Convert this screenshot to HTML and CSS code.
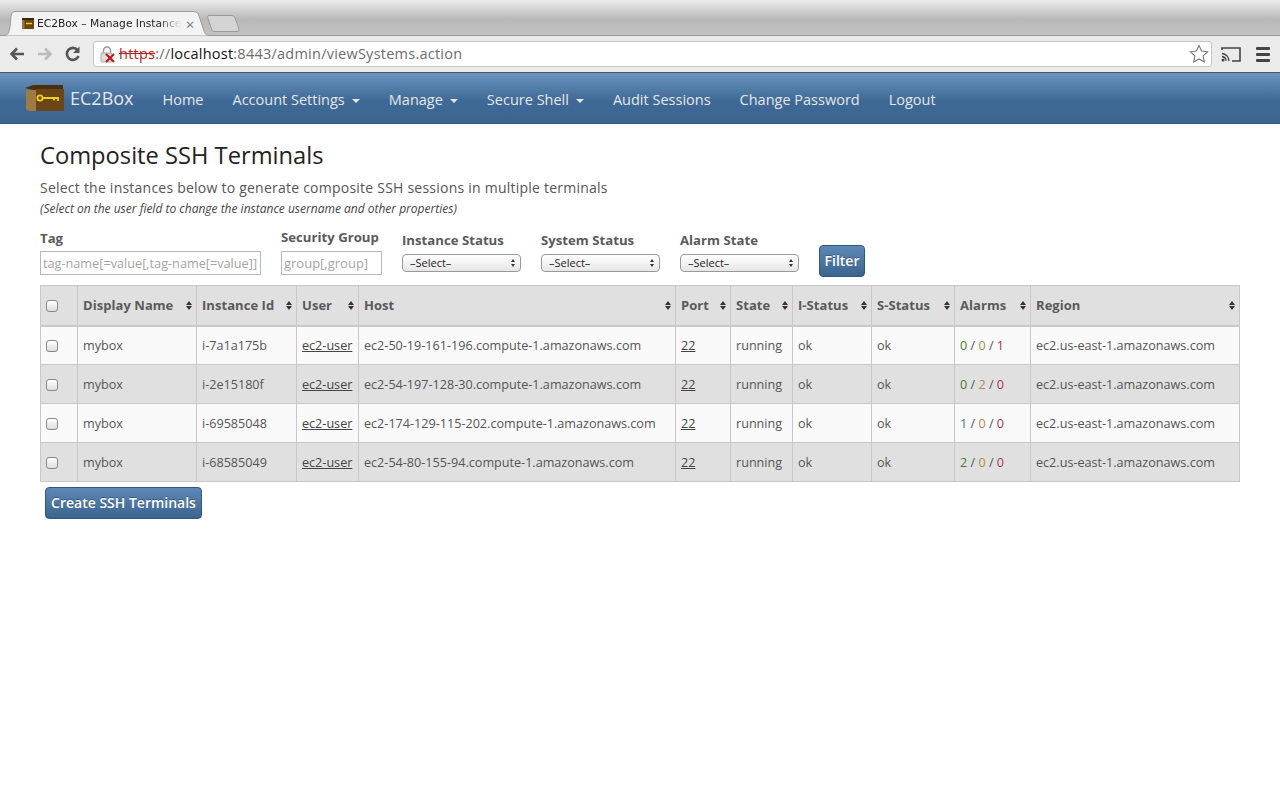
FILE: index.html
```html
<!DOCTYPE html>
<html lang="en">
<head>
<meta charset="utf-8">
<title>EC2Box - Manage Instances</title>
<link rel="stylesheet" href="styles.css">
</head>
<body>
<div class="tabstrip">
  <div class="tab">
    <svg class="tab-shape" width="208" height="25" viewBox="0 0 208 25"><path d="M0.500 24.500C6 24.500 7 21 8 5Q8.500 .5 13 .5H190Q195 .5 196 5L201 20C202 23.500 204 24.500 207.500 24.500" fill="#f3f3f3" stroke="#9c9c9c"/></svg>
    <svg class="favicon" width="14" height="13" viewBox="0 0 14 13"><path d="M1 1h12v11H1z" fill="#6b4513"/><path d="M1 1h2.500v11H1z" fill="#9a7440"/><path d="M1 1h12v2H1z" fill="#3b2508"/><path d="M5 6.500h6" stroke="#e8d020" stroke-width="1.500"/></svg>
    <span class="tab-title">EC2Box – Manage Instance</span>
    <span class="tab-close">×</span>
  </div>
  <svg class="newtab" width="33" height="17" viewBox="0 0 33 17"><path d="M.500 2Q.500 .5 2 .5H25Q27 .5 28 3L32 14Q32.500 16.500 30 16.500H7Q5 16.500 4.500 14z" fill="#d4d4d4" stroke="#9a9a9a"/></svg>
</div>
<div class="toolbar">
  <svg class="tool" width="18" height="18" viewBox="0 0 18 18"><path d="M16 9H4M9 3.500 3.500 9 9 14.500" fill="none" stroke="#555" stroke-width="2.600"/></svg>
  <svg class="tool" width="18" height="18" viewBox="0 0 18 18"><path d="M2 9h12M9 3.500 14.500 9 9 14.500" fill="none" stroke="#bbb" stroke-width="2.600"/></svg>
  <svg class="tool" width="18" height="18" viewBox="0 0 18 18"><path d="M14.500 11A6 6 0 1 1 13.500 5" fill="none" stroke="#555" stroke-width="2.600"/><path d="M15.500 1.500v6.500H9z" fill="#555"/></svg>
  <div class="omnibox">
    <svg class="lock" width="16" height="17" viewBox="0 0 16 17"><path d="M3.500 7V4.500a3.500 3.500 0 0 1 7 0V7" fill="none" stroke="#999" stroke-width="1.500"/><rect x="1" y="7" width="11" height="9" rx="1" fill="#ddd" stroke="#aaa"/><path d="M6 8l8 8M14 8l-8 8" stroke="#c8101c" stroke-width="2"/></svg>
    <span class="url"><s class="scheme">https</s><span class="gray">://</span><span class="host">localhost</span><span class="gray">:8443/admin/viewSystems.action</span></span>
    <svg class="star" width="20" height="20" viewBox="0 0 20 20"><path d="M10 1.500l2.600 5.600 6 .7-4.500 4.100 1.200 6L10 15l-5.300 2.900 1.200-6L1.400 7.800l6-.7z" fill="#fff" stroke="#777" stroke-width="1.100"/></svg>
  </div>
  <svg class="cast" width="20" height="15" viewBox="0 0 20 15"><path d="M1 3V1h18v13h-8" fill="none" stroke="#444" stroke-width="1.600"/><path d="M1 6.500A7.500 7.500 0 0 1 8 14M1 9.500A4.500 4.500 0 0 1 5 14" fill="none" stroke="#444" stroke-width="1.300"/><circle cx="2" cy="13" r="1.500" fill="#444"/></svg>
  <div class="menu-icon"><i></i><i></i><i></i></div>
</div>
<nav class="navbar">
  <svg class="logo" width="40" height="26" viewBox="0 0 40 26"><path d="M0 3 8 0h30v4L12 6z" fill="#4a2f0c"/><path d="M1 5h10v21H4L1 24z" fill="#a07a45"/><path d="M11 4h28v22H11z" fill="#6a4515"/><circle cx="15" cy="13" r="2.600" fill="none" stroke="#ecd21e" stroke-width="1.800"/><path d="M17.500 13H33v3M29 13v2.500" fill="none" stroke="#ecd21e" stroke-width="1.800"/></svg>
  <span class="brand">EC2Box</span>
  <ul class="nav-list">
    <li>Home</li>
    <li>Account Settings<b class="caret"></b></li>
    <li>Manage<b class="caret"></b></li>
    <li>Secure Shell<b class="caret"></b></li>
    <li>Audit Sessions</li>
    <li>Change Password</li>
    <li>Logout</li>
  </ul>
</nav>
<main class="content">
  <h1>Composite SSH Terminals</h1>
  <p class="lead">Select the instances below to generate composite SSH sessions in multiple terminals</p>
  <p class="note">(Select on the user field to change the instance username and other properties)</p>
  <form class="filters">
    <div class="field f-tag"><label>Tag</label><input class="tag-input" type="text" placeholder="tag-name[=value[,tag-name[=value]]"></div>
    <div class="field f-sec"><label>Security Group</label><input class="sec-input" type="text" placeholder="group[,group]"></div>
    <div class="field f-sel"><label>Instance Status</label><div class="sel">–Select–</div></div>
    <div class="field f-sel"><label>System Status</label><div class="sel">–Select–</div></div>
    <div class="field f-sel"><label>Alarm State</label><div class="sel">–Select–</div></div>
    <button class="btn btn-filter" type="button">Filter</button>
  </form>
  <table class="grid">
    <colgroup>
      <col class="c0"><col class="c1"><col class="c2"><col class="c3"><col class="c4"><col class="c5"><col class="c6"><col class="c7"><col class="c8"><col class="c9"><col class="c10">
    </colgroup>
    <thead>
      <tr>
        <th><span class="check"></span></th>
        <th class="sort">Display Name</th>
        <th class="sort">Instance Id</th>
        <th class="sort">User</th>
        <th class="sort">Host</th>
        <th class="sort">Port</th>
        <th class="sort">State</th>
        <th class="sort">I-Status</th>
        <th class="sort">S-Status</th>
        <th class="sort">Alarms</th>
        <th class="sort">Region</th>
      </tr>
    </thead>
    <tbody>
      <tr>
        <td><span class="check"></span></td><td>mybox</td><td>i-7a1a175b</td><td><u>ec2-user</u></td><td>ec2-50-19-161-196.compute-1.amazonaws.com</td><td><u>22</u></td><td>running</td><td>ok</td><td>ok</td>
        <td><span class="g">0</span> / <span class="o">0</span> / <span class="r">1</span></td><td>ec2.us-east-1.amazonaws.com</td>
      </tr>
      <tr>
        <td><span class="check"></span></td><td>mybox</td><td>i-2e15180f</td><td><u>ec2-user</u></td><td>ec2-54-197-128-30.compute-1.amazonaws.com</td><td><u>22</u></td><td>running</td><td>ok</td><td>ok</td>
        <td><span class="g">0</span> / <span class="o">2</span> / <span class="r">0</span></td><td>ec2.us-east-1.amazonaws.com</td>
      </tr>
      <tr>
        <td><span class="check"></span></td><td>mybox</td><td>i-69585048</td><td><u>ec2-user</u></td><td>ec2-174-129-115-202.compute-1.amazonaws.com</td><td><u>22</u></td><td>running</td><td>ok</td><td>ok</td>
        <td><span class="b">1</span> / <span class="o">0</span> / <span class="r">0</span></td><td>ec2.us-east-1.amazonaws.com</td>
      </tr>
      <tr>
        <td><span class="check"></span></td><td>mybox</td><td>i-68585049</td><td><u>ec2-user</u></td><td>ec2-54-80-155-94.compute-1.amazonaws.com</td><td><u>22</u></td><td>running</td><td>ok</td><td>ok</td>
        <td><span class="g">2</span> / <span class="o">0</span> / <span class="r">0</span></td><td>ec2.us-east-1.amazonaws.com</td>
      </tr>
    </tbody>
  </table>
  <button class="btn btn-create" type="button">Create SSH Terminals</button>
</main>
</body>
</html>
```
FILE: styles.css
```css
* { box-sizing: border-box; }
html, body { margin: 0; padding: 0; height: 100%; overflow: hidden; background: #fff; }
body { font-family: "Open Sans", sans-serif; color: #555; font-size: 13px; }

.tabstrip { height: 36px; display: flex; align-items: flex-end; padding-left: 3px; background: linear-gradient(#ececec, #b8b8b8 55%, #c2c2c2); border-bottom: 1px solid #9a9a9a; }
.tab { position: relative; flex: none; width: 208px; height: 25px; margin-bottom: -1px; padding: 0 14px 0 18px; display: flex; align-items: center; }
.tab-shape { position: absolute; left: 0; top: 0; }
.favicon { position: relative; flex: none; margin-right: 2px; }
.tab-title { position: relative; flex: none; white-space: nowrap; font-family: "DejaVu Sans", sans-serif; font-size: 10.700px; color: #222; -webkit-mask-image: linear-gradient(to right, #000 85%, transparent); mask-image: linear-gradient(to right, #000 85%, transparent); }
.tab-close { position: relative; flex: none; width: 14px; margin-left: auto; text-align: center; font-size: 15px; line-height: 14px; color: #777; }
.newtab { flex: none; margin: 0 0 3px -4px; }

.toolbar { height: 36px; display: flex; align-items: center; padding-left: 8px; background: #ebebeb; }
.tool { flex: none; margin-right: 10px; }
.tool:nth-child(3) { margin-right: 11px; }
.omnibox { width: 1119px; height: 26px; display: flex; align-items: center; padding: 0 2px 0 6px; background: #fff; border: 1px solid #c6c6c6; border-radius: 3px; flex: none; }
.lock { flex: none; margin-right: 3px; }
.url { flex: 1; padding-bottom: 2px; font-size: 14.500px; letter-spacing: .24px; white-space: nowrap; }
.scheme { color: #bb2020; }
.gray { color: #6c6c6c; }
.host { color: #111; }
.star { flex: none; }
.cast { flex: none; margin-left: 9px; }
.menu-icon { width: 14px; margin-left: 15px; display: flex; flex-direction: column; gap: 3px; }
.menu-icon i { display: block; height: 3px; background: #444; border-radius: 1px; }

.navbar { height: 52px; display: flex; align-items: center; padding-left: 25px; background: linear-gradient(#6a94bf, #3f6a96 55%, #3a658f); border-top: 1px solid #555; border-bottom: 1px solid #33587c; }
.logo { flex: none; }
.brand { margin-left: 5px; font-size: 18px; color: #e6e6e6; }
.nav-list { list-style: none; margin: 2px 0 0 29px; padding: 0; display: flex; gap: 29px; }
.nav-list li { font-size: 14.500px; color: #e6e6e6; white-space: nowrap; }
.caret { display: inline-block; margin-left: 7px; vertical-align: middle; border-top: 4px solid #e6e6e6; border-left: 4px solid transparent; border-right: 4px solid transparent; }

.content { padding: 0 40px; }
h1 { margin: 16px 0 0; font-size: 23.700px; line-height: 31px; font-weight: 400; color: #222; }
.lead { margin: 7px 0 0; font-size: 14px; line-height: 20px; letter-spacing: .23px; color: #555; }
.note { margin: 3px 0 0; font-size: 12px; line-height: 16px; font-style: italic; color: #444; }

.filters { display: flex; align-items: flex-end; margin-top: 8px; height: 60px; padding-bottom: 8px; }
.field { display: flex; flex-direction: column; margin-right: 20px; }
.field label { font-size: 13.200px; font-weight: 700; color: #5a5a5a; line-height: 16px; white-space: nowrap; }
.f-tag, .f-sec { margin-bottom: 2px; }
.f-tag label { margin-bottom: 5px; }
.f-sec label { margin-bottom: 6px; }
.f-sel { margin-right: 20px; margin-bottom: 5px; }
.f-sel label { margin-bottom: 6px; }
.tag-input, .sec-input { height: 24px; padding: 0 2px; font: 13px "Open Sans", sans-serif; border: 1px solid #b8b8b8; background: #fff; outline: 0; }
.tag-input { width: 221px; font-size: 12.700px; }
.sec-input { width: 101px; }
::placeholder { color: #a4a4a4; opacity: 1; }
.sel { position: relative; width: 119px; height: 18px; padding-left: 7px; font-size: 11px; line-height: 16px; color: #222; background: linear-gradient(#fff, #e6e6e6); border: 1px solid #999; border-radius: 4px; }
.sel::before, .sel::after { content: ""; position: absolute; right: 5px; border-left: 2.500px solid transparent; border-right: 2.500px solid transparent; }
.sel::before { top: 4px; border-bottom: 3px solid #333; }
.sel::after { top: 9px; border-top: 3px solid #333; }
.btn { font-family: "Open Sans", sans-serif; font-weight: 600; color: #fff; background: linear-gradient(#5d89b6, #3a648e); border: 1px solid #33577c; border-radius: 4px; text-shadow: 0 -1px 0 rgba(0,0,0,.3); cursor: default; }
.btn-filter { width: 46px; height: 32px; padding: 0 0 2px; font-size: 14px; }
.btn-create { display: block; width: 157px; height: 32px; margin: 5px 0 0 5px; padding: 0 0 2px; font-size: 14px; }

.grid { width: 1199px; table-layout: fixed; border-collapse: collapse; border: 1px solid #c8c8c8; }
.c0 { width: 37px; } .c1 { width: 119px; } .c2 { width: 100px; } .c3 { width: 62px; } .c4 { width: 317px; } .c5 { width: 55px; } .c6 { width: 62px; } .c7 { width: 79px; } .c8 { width: 83px; } .c9 { width: 76px; } .c10 { width: 209px; }
.grid th, .grid td { padding: 0 5px; border: 1px solid #c8c8c8; white-space: nowrap; text-align: left; font-size: 12.620px; color: #555; }
.grid th { height: 40px; font-size: 13px; color: #5a5a5a; background: #e0e0e0; border-bottom: 2px solid #c8c8c8; font-weight: 700; position: relative; letter-spacing: .05px; }
.grid td { height: 39px; }
.grid u { color: #444; }
.grid tbody tr:nth-child(odd) td { background: #f9f9f9; }
.grid tbody tr:nth-child(even) td { background: #e0e0e0; }
.sort::before, .sort::after { content: ""; position: absolute; right: 4px; border-left: 3.500px solid transparent; border-right: 3.500px solid transparent; }
.sort::before { top: 15px; border-bottom: 4px solid #333; }
.sort::after { top: 20px; border-top: 4px solid #333; }
.check { display: block; width: 12px; height: 12px; margin-top: 2px; background: linear-gradient(#fff, #ddd); border: 1px solid #888; border-radius: 3px; }
.g { color: #4d7a2a; } .o { color: #b58a4a; } .r { color: #b03050; } .b { color: #3a7a96; }
```
